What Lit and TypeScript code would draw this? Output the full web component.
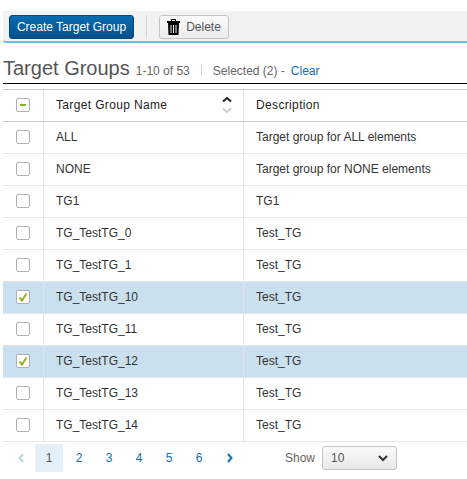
import { css, html, LitElement } from 'lit';
import { customElement } from 'lit/decorators.js';

const rows = [
  { name: 'ALL', desc: 'Target group for ALL elements', on: false },
  { name: 'NONE', desc: 'Target group for NONE elements', on: false },
  { name: 'TG1', desc: 'TG1', on: false },
  { name: 'TG_TestTG_0', desc: 'Test_TG', on: false },
  { name: 'TG_TestTG_1', desc: 'Test_TG', on: false },
  { name: 'TG_TestTG_10', desc: 'Test_TG', on: true },
  { name: 'TG_TestTG_11', desc: 'Test_TG', on: false },
  { name: 'TG_TestTG_12', desc: 'Test_TG', on: true },
  { name: 'TG_TestTG_13', desc: 'Test_TG', on: false },
  { name: 'TG_TestTG_14', desc: 'Test_TG', on: false },
];

@customElement('app-root')
export class AppRoot extends LitElement {
  static styles = css`
    :host {
      display: block;
      width: 467px;
      height: 479px;
      overflow: hidden;
      background: #fff;
      font-family: 'Liberation Sans', Arial, sans-serif;
      font-size: 12px;
      color: #333;
    }
    main {
      padding: 11px 0 0 3px;
    }
    .toolbar {
      display: flex;
      align-items: center;
      height: 28px;
      padding: 2px 0 0 6px;
      background: #f2f2f2;
      border-bottom: 2px solid #62c5e0;
      border-radius: 0 0 0 3px;
    }
    .primary {
      width: 125px;
      height: 24px;
      border-radius: 3px;
      border: 1px solid #004a80;
      background: linear-gradient(#0a6cb0, #004f8c);
      color: #fff;
      font: 12px 'Liberation Sans', Arial, sans-serif;
      padding: 0;
    }
    .sep {
      width: 1px;
      height: 24px;
      background: #d4d4d4;
      margin: 0 12px;
    }
    .ghost {
      display: flex;
      align-items: center;
      justify-content: center;
      gap: 6px;
      width: 70px;
      height: 24px;
      box-sizing: border-box;
      border: 1px solid #c4c4c4;
      border-radius: 3px;
      background: linear-gradient(#fafafa, #ececec);
      color: #555;
      font: 12px 'Liberation Sans', Arial, sans-serif;
      padding: 0;
    }
    .title {
      display: flex;
      align-items: baseline;
      height: 41px;
      box-sizing: border-box;
      padding-top: 13px;
      border-bottom: 1px solid #000;
      white-space: nowrap;
    }
    h1 {
      margin: 0;
      font-size: 20px;
      font-weight: 400;
      color: #555;
      line-height: 25px;
    }
    .count {
      margin-left: 6px;
      color: #666;
    }
    .bar {
      width: 1px;
      height: 10px;
      background: #ccc;
      margin: 0 11px;
    }
    .sel {
      color: #666;
    }
    .clear {
      margin-left: 6px;
      color: #0f6fb8;
    }
    .grid {
      margin-top: 5px;
      border-top: 1px solid #ccc;
    }
    .row {
      display: grid;
      grid-template-columns: 40px 200px 1fr;
      height: 32px;
      box-sizing: border-box;
      border-bottom: 1px solid #e4e4e4;
    }
    .row > div {
      display: flex;
      align-items: center;
      padding: 0 0 2px 12px;
      white-space: nowrap;
      border-left: 1px solid #e4e4e4;
    }
    .row > div:first-child {
      border-left: 0;
      padding: 0 0 1px 13px;
    }
    .head {
      border-bottom: 1px solid #ccc;
      color: #222;
      letter-spacing: 0.35px;
    }
    .row.on {
      background: #cbe0ef;
    }
    .box {
      width: 12px;
      height: 12px;
      border: 1px solid #b0b0b0;
      border-radius: 2px;
      background: #fff;
      display: flex;
      align-items: center;
      justify-content: center;
    }
    .row > .namehead {
      justify-content: space-between;
      padding-right: 11px;
    }
    .pager {
      display: flex;
      align-items: center;
      height: 32px;
    }
    .pages {
      display: flex;
      align-items: center;
      padding-left: 11px;
    }
    .arrow {
      width: 14px;
      display: flex;
      justify-content: center;
    }
    .next {
      margin-left: 9px;
    }
    .page {
      width: 30px;
      text-align: center;
      line-height: 28px;
      color: #0f6fb8;
      font-size: 12px;
    }
    .page.cur {
      width: 28px;
      margin: 0 1px 0 7px;
      background: #e4eff7;
      color: #555;
      border-radius: 2px;
    }
    .show {
      margin-left: 48px;
      color: #666;
    }
    .select {
      display: flex;
      align-items: center;
      justify-content: space-between;
      width: 75px;
      height: 24px;
      margin-left: 7px;
      padding: 0 8px;
      box-sizing: border-box;
      border: 1px solid #c4c4c4;
      border-radius: 3px;
      background: linear-gradient(#fafafa, #e8e8e8);
      color: #555;
    }
  `;

  render() {
    return html`
      <main>
        <div class="toolbar">
          <button class="primary">Create Target Group</button>
          <div class="sep"></div>
          <button class="ghost">
            <svg width="13" height="16" viewBox="0 0 13 16" fill="#000" fill-rule="evenodd">
              <path d="M4 0h5v2h4v2H0V2h4zM5 1v1h3V1z" />
              <path d="M1 4h11l-.5 12h-10zM3.5 6h1v8h-1zM6 6h1v8H6zM8.5 6h1v8h-1z" />
            </svg>
            Delete
          </button>
        </div>
        <div class="title">
          <h1>Target Groups</h1>
          <span class="count">1-10 of 53</span>
          <span class="bar"></span>
          <span class="sel">Selected (2) -</span>
          <span class="clear">Clear</span>
        </div>
        <div class="grid">
          <div class="row head">
            <div>
              <span class="box">
                <svg width="8" height="8" viewBox="0 0 8 8"><rect x="1" y="3" width="6" height="2" fill="#8ab51d" /></svg>
              </span>
            </div>
            <div class="namehead">
              Target Group Name
              <svg width="10" height="18" viewBox="0 0 10 18" fill="none" stroke-width="2">
                <path d="M1 5.5l4-3.5 4 3.5" stroke="#222" />
                <path d="M1 12.5l4 3.5 4-3.5" stroke="#ccc" />
              </svg>
            </div>
            <div>Description</div>
          </div>
          ${rows.map(
            (r) => html`
              <div class="row ${r.on ? 'on' : ''}">
                <div>
                  <span class="box">
                    ${r.on
                      ? html`<svg width="10" height="10" viewBox="0 0 10 10" fill="none">
                          <path d="M1.5 5.5 4 8.5 8.5 1.5" stroke="#8ab51d" stroke-width="2" />
                        </svg>`
                      : ''}
                  </span>
                </div>
                <div>${r.name}</div>
                <div>${r.desc}</div>
              </div>
            `,
          )}
        </div>
        <div class="pager">
          <div class="pages">
            <span class="arrow">
              <svg width="6" height="10" viewBox="0 0 6 10" fill="none"><path d="M5 1 1.5 5 5 9" stroke="#b9d6ea" stroke-width="2" /></svg>
            </span>
            <span class="page cur">1</span>
            ${[2, 3, 4, 5, 6].map((p) => html`<span class="page">${p}</span>`)}
            <span class="arrow next">
              <svg width="6" height="10" viewBox="0 0 6 10" fill="none"><path d="M1 1l3.5 4L1 9" stroke="#0f6fb8" stroke-width="2" /></svg>
            </span>
          </div>
          <span class="show">Show</span>
          <div class="select">
            10
            <svg width="10" height="7" viewBox="0 0 10 7" fill="none"><path d="M1 1l4 4 4-4" stroke="#333" stroke-width="2" /></svg>
          </div>
        </div>
      </main>
    `;
  }
}
